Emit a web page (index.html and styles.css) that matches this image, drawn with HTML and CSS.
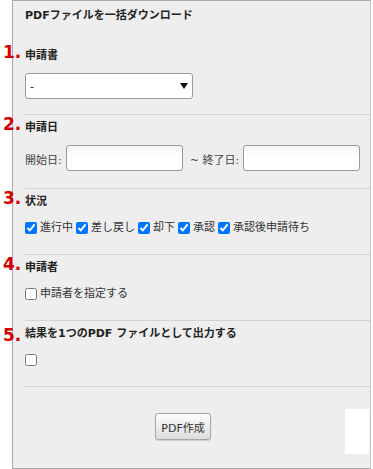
FILE: index.html
```html
<!DOCTYPE html>
<html lang="ja">
<head>
    <meta charset="utf-8" />
    <title>PDFファイルを一括ダウンロード</title>
    <link rel="stylesheet" href="styles.css">
</head>
<body>
  <div class="panel">
      <div class="panel-title">PDFファイルを一括ダウンロード</div>

      <div class="section section-first">
          <div class="section-head"><span class="num">1.</span>申請書</div>
          <select class="doc-select">
              <option>-</option>
          </select>
      </div>

      <div class="section">
          <div class="section-head"><span class="num">2.</span>申請日</div>
          <div class="date-row">
              <span class="date-label">開始日:</span>
              <input type="text" class="date-input">
              <span class="date-label date-label-end">~ 終了日:</span>
              <input type="text" class="date-input">
          </div>
      </div>

      <div class="section">
          <div class="section-head"><span class="num">3.</span>状況</div>
          <div class="check-row">
              <label><input type="checkbox" checked>進行中</label>
              <label><input type="checkbox" checked>差し戻し</label>
              <label><input type="checkbox" checked>却下</label>
              <label><input type="checkbox" checked>承認</label>
              <label><input type="checkbox" checked>承認後申請待ち</label>
          </div>
      </div>

      <div class="section">
          <div class="section-head"><span class="num">4.</span>申請者</div>
          <div class="check-row">
              <label><input type="checkbox">申請者を指定する</label>
          </div>
      </div>

      <div class="section">
          <div class="section-head"><span class="num num-low">5.</span>結果を1つのPDF ファイルとして出力する</div>
          <div class="check-row">
              <label><input type="checkbox"></label>
          </div>
      </div>

      <div class="panel-foot">
          <button class="make-btn">PDF作成</button>
          <div class="blank-box"></div>
      </div>
  </div>
</body>
</html>
```

FILE: styles.css
```css
body{
    margin: 0;
    background: #fff;
    font-family: "DejaVu Sans", "Noto Sans CJK JP", sans-serif;
    font-size: 11px;
    color: #333;
}

.panel{
    margin-left: 12px;
    width: 359px;
    height: 469px;
    box-sizing: border-box;
    border: 1px solid #a9a9a9;
    border-right-color: #c6c6c6;
    background: #eee;
    padding: 6px 0 0 12px;
}

.panel-title{
    font-weight: bold;
    line-height: 16px;
    height: 15px;
    padding-top: 1px;
    color: #222;
    margin-bottom: 23px;
}

.section{
    border-bottom: 1px solid #d3d3d3;
    padding-bottom: 17px;
}

.section-first{
    padding-bottom: 15px;
}

.section-head{
    position: relative;
    font-weight: bold;
    line-height: 16px;
    height: 14px;
    padding-top: 2px;
    color: #222;
    margin: 3px 0 11px 0;
}

.num{
    position: absolute;
    left: -22px;
    top: -4px;
    font-family: "DejaVu Sans", sans-serif;
    font-size: 17px;
    font-weight: bold;
    line-height: 20px;
    color: #d40000;
}

.num-low{
    top: 1px;
}

.doc-select{
    display: block;
    -webkit-appearance: none;
    appearance: none;
    width: 168px;
    height: 26px;
    margin: 0;
    padding: 0 0 0 4px;
    border: 1px solid #9a9a9a;
    border-radius: 3px;
    background: #fff url("data:image/svg+xml,%3Csvg xmlns='http://www.w3.org/2000/svg' width='8' height='6'%3E%3Cpath d='M0 0h8L4 6z' fill='%23111'/%3E%3C/svg%3E") no-repeat right 4px center;
    font-family: inherit;
    font-size: 11px;
    color: #222;
}

.date-row{
    display: flex;
    align-items: center;
}

.date-label{
    margin-right: 4px;
    padding-top: 2px;
    color: #444;
}

.date-label-end{
    margin-left: 7px;
}

.date-input{
    width: 117px;
    height: 26px;
    box-sizing: border-box;
    margin: 0;
    border: 1px solid #9a9a9a;
    border-radius: 3px;
    background: linear-gradient(#f4f4f4, #fff 40%);
}

.check-row{
    display: flex;
    height: 18px;
    line-height: 18px;
    color: #333;
}

.check-row label{
    display: flex;
    align-items: center;
    margin-right: 3px;
}

.check-row input{
    width: 12px;
    height: 12px;
    margin: 0 3px 0 0;
}

.panel-foot{
    display: flex;
    align-items: flex-start;
    padding-top: 22px;
}

.make-btn{
    margin: 4px 0 0 130px;
    width: 56px;
    height: 27px;
    padding: 0;
    border: 1px solid #a4a4a4;
    border-radius: 3px;
    background: linear-gradient(#fdfdfd, #dcdcdc);
    box-shadow: 0 1px 1px rgba(0,0,0,0.15);
    font-family: inherit;
    font-size: 11px;
    color: #333;
}

.blank-box{
    width: 24px;
    height: 45px;
    margin-left: auto;
    margin-right: 1px;
    background: #fff;
}
```
